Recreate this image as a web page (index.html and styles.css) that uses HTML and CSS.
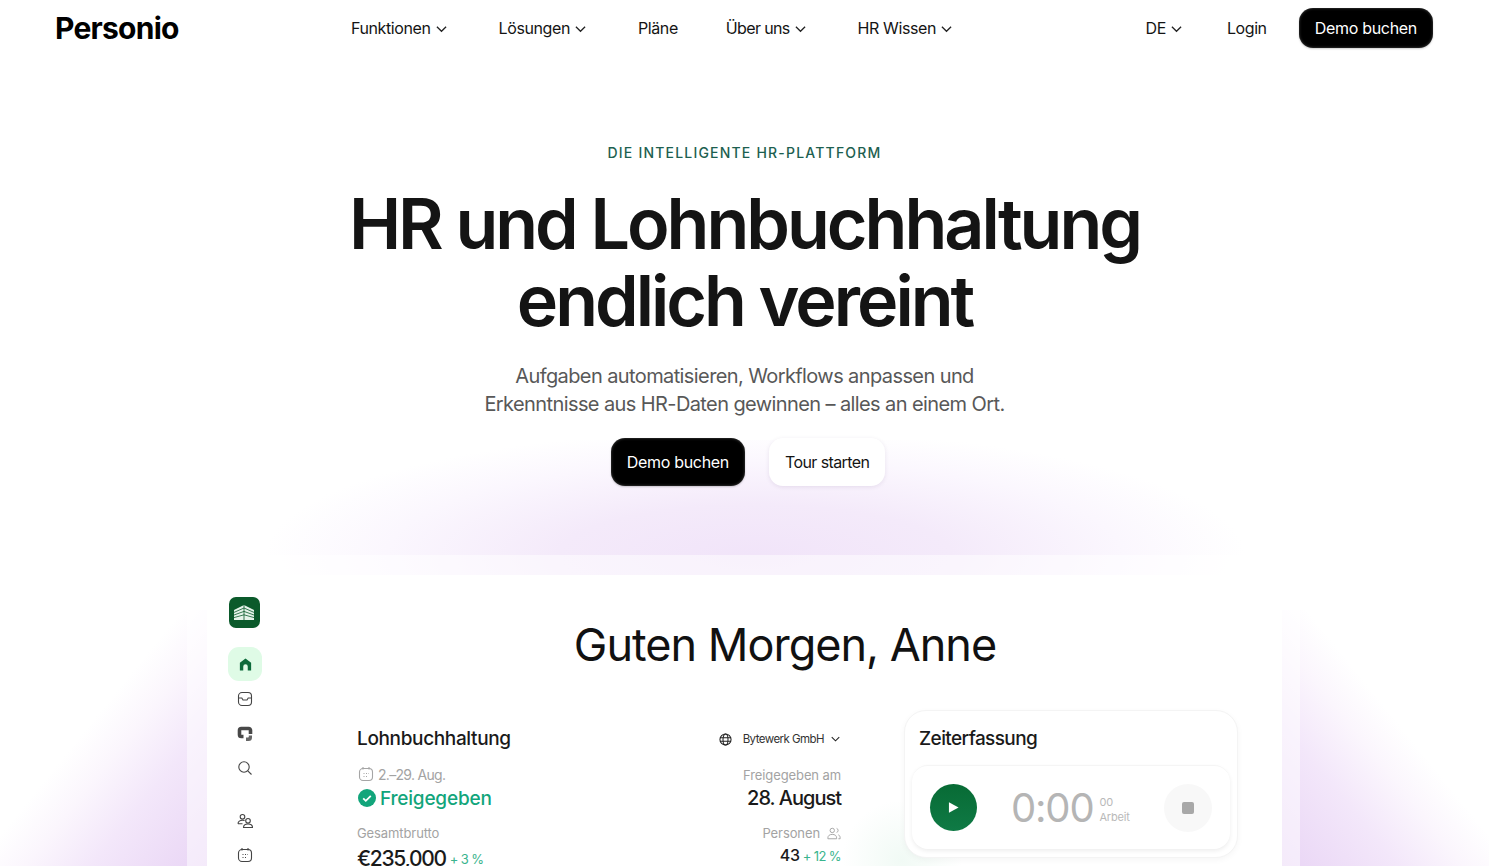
FILE: index.html
```html
<!DOCTYPE html>
<html lang="de">
<head>
<meta charset="utf-8">
<title>Personio</title>
<link rel="stylesheet" href="styles.css">
</head>
<body>
<div class="page">
  <header class="header">
    <div class="logo">Personio</div>
    <nav class="nav">
      <a class="nav-item">Funktionen <svg class="chev" viewBox="0 0 12 8"><path d="M1 1.500l5 5 5-5"/></svg></a>
      <a class="nav-item">Lösungen <svg class="chev" viewBox="0 0 12 8"><path d="M1 1.500l5 5 5-5"/></svg></a>
      <a class="nav-item nav-p">Pläne</a>
      <a class="nav-item nav-u">Über uns <svg class="chev" viewBox="0 0 12 8"><path d="M1 1.500l5 5 5-5"/></svg></a>
      <a class="nav-item">HR Wissen <svg class="chev" viewBox="0 0 12 8"><path d="M1 1.500l5 5 5-5"/></svg></a>
    </nav>
    <div class="actions">
      <a class="nav-item">DE <svg class="chev" viewBox="0 0 12 8"><path d="M1 1.500l5 5 5-5"/></svg></a>
      <a class="nav-item nav-login">Login</a>
      <a class="btn btn-dark btn-nav">Demo buchen</a>
    </div>
  </header>

  <section class="hero">
    <p class="eyebrow">DIE INTELLIGENTE HR-PLATTFORM</p>
    <h1 class="headline">HR und Lohnbuchhaltung<br>endlich vereint</h1>
    <p class="lead">Aufgaben automatisieren, Workflows anpassen und<br>Erkenntnisse aus HR-Daten gewinnen – alles an einem Ort.</p>
    <div class="cta">
      <a class="btn btn-dark">Demo buchen</a>
      <a class="btn btn-light">Tour starten</a>
    </div>
  </section>

  <section class="stage">
    <div class="glow glow-top"></div>
    <div class="glow glow-left"></div>
    <div class="glow glow-right"></div>
    <div class="frame"></div>
    <div class="app">
      <aside class="rail">
        <div class="brand-tile">
          <svg viewBox="0 0 20 15" width="20" height="15"><path class="brand-roof" d="M0 5L10 0l10 5v10H0z"/><path class="brand-lines" d="M0 7.400L10 3l10 4.400M0 10L10 6.400l10 3.600M0 12.600L10 9.800l10 2.800M10 0v15"/></svg>
        </div>
        <div class="home-tile">
          <svg viewBox="0 0 16 16" width="15" height="15"><path class="home" d="M8 1.500L14 6v8.500h-3.600V10a2.400 2.400 0 0 0-4.800 0v4.500H2V6z"/></svg>
        </div>
        <div class="rail-icon"><svg viewBox="0 0 16 16" width="16" height="16"><g class="line"><rect x="1.500" y="1.500" width="13" height="13" rx="3.500"/><path d="M1.500 7h3.300l1.200 2h4l1.200-2h3.300"/></g></svg></div>
        <div class="rail-icon"><svg viewBox="0 0 16 16" width="16" height="16"><path class="ring" d="M6.500 10.500H4.300A1.800 1.800 0 0 1 2.500 8.700V4.300A1.800 1.800 0 0 1 4.300 2.500h7.400A1.800 1.800 0 0 1 13.500 4.300V8"/><path class="ring-tail" d="M15 9.500v2A3.500 3.500 0 0 1 11.500 15H9v-3.500h2a.8.8 0 0 0 .8-.8V9.500z"/></svg></div>
        <div class="rail-icon"><svg viewBox="0 0 16 16" width="16" height="16"><g class="line"><circle cx="7" cy="7" r="5.200"/><path d="M10.800 10.800L14.500 14.500"/></g></svg></div>
        <div class="rail-icon rail-gap"><svg viewBox="0 0 16 16" width="16" height="16"><g class="line"><circle cx="5.500" cy="3.800" r="2.300"/><path d="M1 10.800c0-2.300 2-3.600 4.500-3.600.8 0 1.500.1 2.100.4M1 10.800h4.500"/><circle cx="11" cy="7.800" r="2.300"/><path d="M6.500 14.500c0-2.200 2-3.500 4.500-3.500s4.500 1.300 4.500 3.500z"/></g></svg></div>
        <div class="rail-icon"><svg viewBox="0 0 16 16" width="16" height="16"><g class="line"><rect x="1.500" y="2.500" width="13" height="12" rx="3.500"/><path d="M5 1v2.500M11 1v2.500M5.500 7.500h1M8 7.500h1M10.500 7.500h.5M5.500 10.500h1M8 10.500h1"/></g></svg></div>
      </aside>

      <main class="panel">
        <h2 class="greeting">Guten Morgen, Anne</h2>
        <div class="cards">
          <article class="payroll">
            <div class="row">
              <h3 class="card-title">Lohnbuchhaltung</h3>
              <div class="company">
                <svg viewBox="0 0 14 14" width="13" height="13"><g class="line line-dark"><circle cx="7" cy="7" r="6"/><ellipse cx="7" cy="7" rx="2.700" ry="6"/><path d="M1 5h12M1 9h12"/></g></svg>
                <span>Bytewerk GmbH</span>
                <svg class="chev chev-sm" viewBox="0 0 12 8"><path d="M1 1.500l5 5 5-5"/></svg>
              </div>
            </div>
            <div class="row row-dates">
              <div class="date"><svg viewBox="0 0 16 16" width="16" height="16"><g class="line line-soft"><rect x="1.500" y="2.500" width="13" height="12" rx="3.500"/><path d="M5 1v2.500M11 1v2.500M5.500 7.500h1M8 7.500h1M10.500 7.500h.5M5.500 10.500h1M8 10.500h1"/></g></svg>2.–29. Aug.</div>
              <div class="muted">Freigegeben am</div>
            </div>
            <div class="row row-status">
              <div class="status"><svg viewBox="0 0 18 18" width="18" height="18"><circle class="status-disc" cx="9" cy="9" r="9"/><path class="status-tick" d="M5.200 9.300l2.600 2.500 5-5"/></svg>Freigegeben</div>
              <div class="big">28. August</div>
            </div>
            <div class="row row-labels">
              <div class="muted">Gesamtbrutto</div>
              <div class="muted people">Personen <svg viewBox="0 0 16 14" width="14" height="13"><g class="line line-soft"><circle cx="6" cy="3.500" r="2.500"/><path d="M1 13v-1c0-2.500 2-4 5-4s5 1.500 5 4v1z"/><path d="M11 1.200a2.400 2.400 0 0 1 0 4.600M13 8.500c1.300.6 2 1.800 2 3.300v1.200h-2"/></g></svg></div>
            </div>
            <div class="row row-values">
              <div class="total">€235,000<span class="delta delta-a">+ 3 %</span></div>
              <div class="count">43<span class="delta">+ 12 %</span></div>
            </div>
          </article>

          <article class="time-card">
            <h3 class="card-title">Zeiterfassung</h3>
            <div class="timer">
              <div class="play"><svg viewBox="0 0 12 14" width="11" height="13"><path class="play-shape" d="M1 1.200v11.600L11.500 7z"/></svg></div>
              <div class="clock">0:00</div>
              <div class="clock-meta"><span>00</span><span>Arbeit</span></div>
              <div class="stop"><span class="stop-square"></span></div>
            </div>
          </article>
        </div>
      </main>
    </div>
  </section>
</div>
</body>
</html>
```

FILE: styles.css
```css
* { box-sizing: border-box; }
html, body { margin: 0; height: 100%; background: #fff; overflow: hidden; }
body { font-family: Inter, "Liberation Sans", sans-serif; color: #141414; }
h1, h2, h3, p { margin: 0; }
.page { width: 1489px; height: 866px; overflow: hidden; position: relative; }

.header { height: 56px; display: flex; align-items: center; padding: 0 56px; position: relative; }
.logo { font-size: 30px; font-weight: 650; letter-spacing: -0.75px; line-height: 56px; width: 295px; margin-left: -1px; margin-right: 1px; color: #000; }
.nav { display: flex; gap: 52px; flex: 1; }
.nav-item { font-size: 16px; letter-spacing: -0.4px; display: inline-flex; align-items: center; gap: 5px; color: #141414; white-space: nowrap; line-height: 20px; }
.nav-p { margin-right: -4px; }
.nav-u { letter-spacing: -0.65px; }
.chev { width: 11px; height: 8px; fill: none; stroke: #222; stroke-width: 1.400; margin-top: 2px; }
.chev-sm { width: 9px; height: 6px; margin: 0 1px 0 -4px; }
.actions { display: flex; align-items: center; gap: 45px; }
.nav-login { margin-right: -13px; }

.btn { height: 48px; padding: 0 16px; border-radius: 14px; display: inline-flex; align-items: center; font-size: 16px; letter-spacing: -0.3px; white-space: nowrap; }
.btn-dark { background: #000; color: #fff; box-shadow: inset 0 0 3px rgba(255,255,255,.3), 0 1px 2px rgba(0,0,0,.2); }
.btn-light { background: #fff; color: #141414; letter-spacing: -0.6px; box-shadow: 0 1px 4px rgba(60,30,90,.1); }
.btn-nav { height: 40px; }

.hero { text-align: center; padding-top: 87px; position: relative; z-index: 2; }
.eyebrow { font-size: 14px; line-height: 20px; font-weight: 500; letter-spacing: 1.200px; color: #1d5f50; }
.headline { font-size: 70px; line-height: 77px; font-weight: 600; letter-spacing: -3px; margin-top: 22px; color: #141414; }
.lead { font-size: 20px; line-height: 28px; letter-spacing: -0.6px; color: #585858; margin-top: 23px; }
.cta { display: flex; justify-content: center; gap: 24px; margin-top: 20px; padding-left: 7px; }

.stage { position: relative; height: 380px; }
.glow { position: absolute; }
.glow-top { left: 265px; width: 980px; top: -46px; height: 135px; background: radial-gradient(ellipse 490px 125px at 50% 115px, #f1e4f9 0%, #f4eafa 40%, #fbf7fe 75%, rgba(255,255,255,0) 100%); }
.glow-left { left: 0; width: 207px; top: 124px; height: 256px; background: linear-gradient(to top left, #e9d5f5 0%, #f3e7fa 28%, #fbf6fd 44%, rgba(255,255,255,0) 56%); }
.glow-right { left: 1282px; width: 207px; top: 124px; height: 256px; background: linear-gradient(to top right, #e9d5f5 0%, #f3e7fa 28%, #fbf6fd 44%, rgba(255,255,255,0) 56%); }
.frame { position: absolute; left: 187px; top: 69px; width: 1113px; height: 320px; background: rgba(255,255,255,.5); }

.app { position: absolute; left: 207px; top: 89px; width: 1075px; height: 400px; display: flex; background: #fff; }
.rail { width: 78px; padding: 22px 2px 0 0; display: flex; flex-direction: column; align-items: center; }
.brand-tile { width: 31px; height: 31px; margin-right: 2px; border-radius: 7px; background: #0b5a2b; display: flex; align-items: center; justify-content: center; }
.brand-roof { fill: #e6f4ea; }
.brand-lines { fill: none; stroke: #0b5a2b; stroke-width: .800; }
.home-tile { width: 34px; height: 34px; margin: 19px 0 1px; border-radius: 11px; background: #dffbe6; display: flex; align-items: center; justify-content: center; }
.home { fill: #0c6b3a; }
.rail-icon { height: 34.500px; display: flex; align-items: center; justify-content: center; }
.rail-gap { margin-top: 18px; }
.line { fill: none; stroke: #444; stroke-width: 1.100; }
.line-dark { stroke: #222; }
.line-soft { stroke: #a5a5a5; }
.ring { fill: none; stroke: #484848; stroke-width: 3.600; }
.ring-tail { fill: #666; }

.panel { width: 997px; padding: 40px 43px 0 72px; }
.greeting { font-size: 45px; line-height: 60px; font-weight: 400; letter-spacing: -1px; text-align: center; color: #111; width: 856px; }
.cards { display: flex; gap: 63px; margin-top: 35px; background: radial-gradient(circle 60px at 545px 150px, #f1faf5, rgba(255,255,255,0)); }
.payroll { width: 484px; padding-top: 15px; }
.row { display: flex; justify-content: space-between; align-items: center; }
.card-title { font-size: 19px; line-height: 28px; font-weight: 500; letter-spacing: -0.35px; color: #1a1a1a; }
.company { display: flex; align-items: center; gap: 11px; font-size: 11.500px; letter-spacing: -0.55px; color: #333; }
.row-dates { margin-top: 11px; height: 20px; }
.date { display: flex; align-items: center; gap: 4px; font-size: 14px; letter-spacing: -0.7px; color: #a3a3a3; padding-left: 1px; }
.muted { font-size: 13px; color: #a3a3a3; letter-spacing: -0.1px; }
.row-dates .muted { margin-top: 1px; }
.row-status { height: 28px; }
.status { display: flex; align-items: center; gap: 4px; padding-left: 1px; font-size: 19px; font-weight: 500; letter-spacing: -0.2px; color: #12a57b; }
.status-disc { fill: #12a57b; }
.status-tick { fill: none; stroke: #fff; stroke-width: 1.800; }
.big { font-size: 20px; font-weight: 500; letter-spacing: -1px; color: #1a1a1a; }
.row-labels { height: 20px; margin-top: 11px; }
.people { display: flex; align-items: center; gap: 7px; }
.row-values { margin-top: 2px; height: 26px; align-items: flex-start; }
.total { font-size: 21px; font-weight: 500; letter-spacing: -1.300px; color: #1a1a1a; line-height: 28px; }
.count { font-size: 16px; font-weight: 500; letter-spacing: -0.3px; color: #1a1a1a; line-height: 20px; }
.delta { font-size: 13px; font-weight: 400; letter-spacing: -0.6px; color: #3ab48d; margin-left: 3px; }
.delta-a { margin-left: 4px; vertical-align: 2px; }

.time-card { width: 334px; height: 148px; border-radius: 22px; background: #fff; border: 1px solid #f4f4f4; box-shadow: 0 2px 6px rgba(0,0,0,.04); padding: 14px 7px 7px; }
.time-card .card-title { padding-left: 7px; letter-spacing: -0.6px; }
.timer { margin-top: 12px; height: 84px; border-radius: 16px; background: #fff; border-top: 1px solid #f5f5f5; box-shadow: 0 2px 4px rgba(0,0,0,.07); padding: 0 18px; display: flex; align-items: center; }
.play { width: 47px; height: 47px; border-radius: 50%; background: linear-gradient(#086b35, #0f7a45); display: flex; align-items: center; justify-content: center; }
.play-shape { fill: #fff; }
.clock { font-size: 40px; font-weight: 400; color: #b5b5b5; margin-left: 34px; letter-spacing: -1.200px; }
.clock-meta { display: flex; flex-direction: column; font-size: 11px; line-height: 15px; letter-spacing: -0.2px; color: #b9b9b9; margin: 4px 0 0 6px; }
.stop { width: 48px; height: 48px; border-radius: 50%; background: #f8f8f8; margin-left: auto; display: flex; align-items: center; justify-content: center; }
.stop-square { width: 12px; height: 12px; border-radius: 2px; background: #a8a8a8; }
```
